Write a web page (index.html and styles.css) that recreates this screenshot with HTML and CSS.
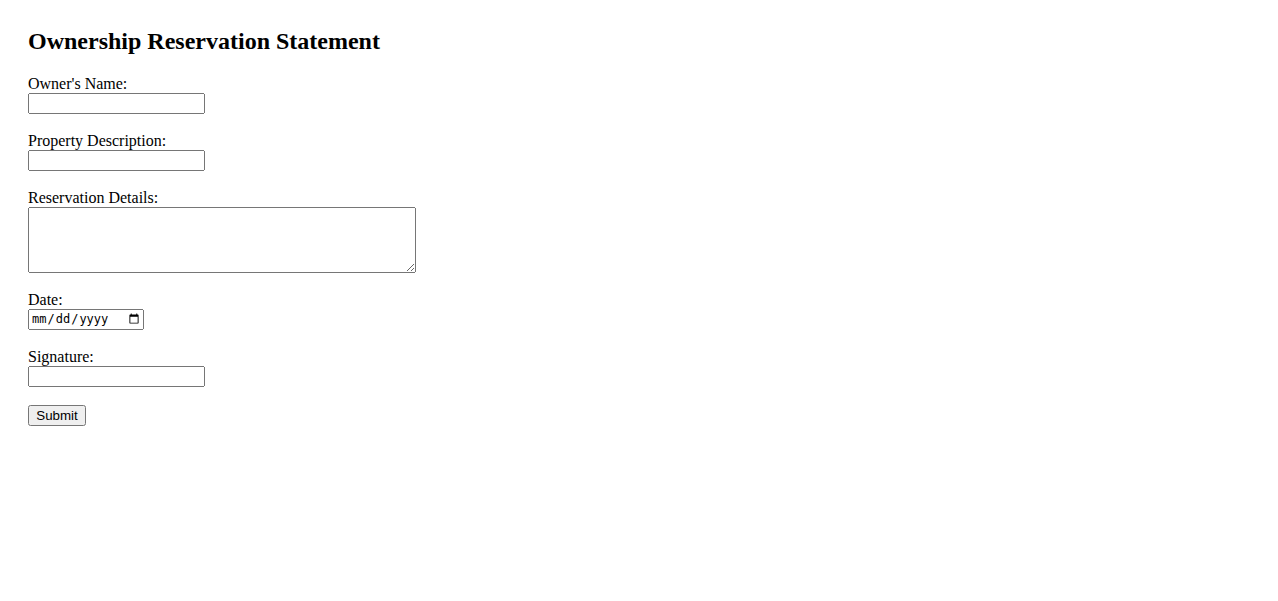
FILE: index.html
```html
<!DOCTYPE html>
<html lang="en">
<head>
    <meta charset="UTF-8">
    <meta name="viewport" content="width=device-width, initial-scale=1.0">
    <title>Ownership Reservation Statement</title>
    <link rel="stylesheet" href="styles.css">
</head>
<body>
    <div class="container">
        <h2>Ownership Reservation Statement</h2>
        <form class="statement-form">
            <label for="ownerName">Owner's Name:</label><br>
            <input type="text" class="text-field" id="ownerName" name="ownerName"><br><br>

            <label for="propertyDescription">Property Description:</label><br>
            <input type="text" class="text-field" id="propertyDescription" name="propertyDescription"><br><br>

            <label for="reservationDetails">Reservation Details:</label><br>
            <textarea class="details-field" id="reservationDetails" name="reservationDetails" rows="4" cols="50"></textarea><br><br>

            <label for="date">Date:</label><br>
            <input type="date" class="date-field" id="date" name="date"><br><br>

            <label for="signature">Signature:</label><br>
            <input type="text" class="text-field" id="signature" name="signature"><br><br>

            <input type="submit" class="submit-button" value="Submit">
        </form>
    </div>
</body>
</html>
```

FILE: styles.css
```css
body {
    font-family: 'Liberation Serif', serif;
    font-size: 16px;
    margin: 8px;
}
.container {
    padding: 20px;
}
h2 {
    margin-top: 0;
}
.text-field {
    box-sizing: border-box;
    width: 177px;
    height: 21px;
}
.details-field {
    box-sizing: border-box;
    width: 388px;
    height: 66px;
    vertical-align: bottom;
}
.date-field {
    box-sizing: border-box;
    width: 116px;
    height: 21px;
    font-size: 12px;
}
.submit-button {
    font-family: 'Liberation Sans', Arial, sans-serif;
    box-sizing: border-box;
    width: 58px;
    height: 21px;
    font-size: 13.33px;
}
```
